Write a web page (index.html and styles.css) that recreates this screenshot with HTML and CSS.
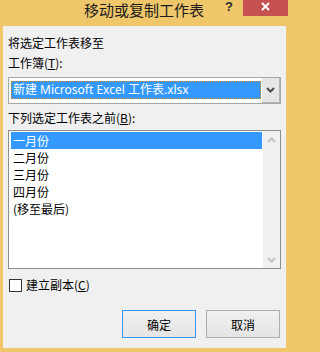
FILE: index.html
```html
<!DOCTYPE html>
<html lang="zh-CN">
<head>
<meta charset="utf-8">
<title>移动或复制工作表</title>
<link rel="stylesheet" href="styles.css">
</head>
<body>
<div class="window">
  <div class="titlebar">
    <div class="tb-side"></div>
    <div class="tb-title">移动或复制工作表</div>
    <div class="tb-side tb-controls">
      <span class="help">?</span>
      <span class="close"><svg width="9" height="9" viewBox="0 0 9 9"><path d="M1 1 L8 8 M8 1 L1 8" stroke="#fff" stroke-width="2" fill="none"/></svg></span>
    </div>
  </div>
  <div class="client">
    <div class="label first">将选定工作表移至</div>
    <div class="label second">工作簿(<u>T</u>):</div>
    <div class="combo">
      <div class="combo-value"><span>新建 Microsoft Excel 工作表.xlsx</span></div>
      <div class="combo-btn"><svg width="9" height="6" viewBox="0 0 9 6"><path d="M1 1 L4.5 4.5 L8 1" stroke="#4a4a4a" stroke-width="2" fill="none"/></svg></div>
    </div>
    <div class="label third">下列选定工作表之前(<u>B</u>):</div>
    <div class="listbox">
      <div class="list">
        <div class="row selected">一月份</div>
        <div class="row">二月份</div>
        <div class="row">三月份</div>
        <div class="row">四月份</div>
        <div class="row">(移至最后)</div>
      </div>
      <div class="scrollbar">
        <div class="arrow"><svg width="9" height="6" viewBox="0 0 9 6"><path d="M1 5 L4.5 1.5 L8 5" stroke="#c2c2c2" stroke-width="2" fill="none"/></svg></div>
        <div class="arrow"><svg width="9" height="6" viewBox="0 0 9 6"><path d="M1 1 L4.5 4.5 L8 1" stroke="#c2c2c2" stroke-width="2" fill="none"/></svg></div>
      </div>
    </div>
    <div class="check-row">
      <span class="checkbox"></span>
      <span class="check-label">建立副本(<u>C</u>)</span>
    </div>
    <div class="buttons">
      <div class="btn default">确定</div>
      <div class="btn">取消</div>
    </div>
  </div>
</div>
</body>
</html>
```
FILE: styles.css
```css
html, body {
  margin: 0;
  padding: 0;
}
body {
  width: 290px;
  height: 352px;
  overflow: hidden;
  background: #efc76a;
  font-family: "Noto Sans", "Noto Sans CJK SC", sans-serif;
  font-size: 12px;
  color: #000;
}
.window {
  display: flex;
  flex-direction: column;
  height: 352px;
}
.titlebar {
  height: 26px;
  display: grid;
  grid-template-columns: 1fr auto 1fr;
  align-items: start;
  padding-right: 2px;
}
.tb-title {
  font-family: "Noto Sans CJK SC", sans-serif;
  font-size: 15px;
  line-height: 20px;
  color: #1a1a1a;
}
.tb-controls {
  display: flex;
  justify-content: flex-end;
  align-items: flex-start;
}
.help {
  width: 20px;
  margin-right: 4px;
  text-align: center;
  font-family: "Liberation Sans", sans-serif;
  font-weight: bold;
  font-size: 13px;
  line-height: 13px;
  color: #2b2b2b;
}
.close {
  width: 45px;
  height: 16px;
  background: #c75050;
  display: flex;
  justify-content: center;
  align-items: flex-start;
  padding-top: 2px;
  box-sizing: border-box;
}
.client {
  flex: 1;
  margin: 0 4px 4px 3px;
  background: #f0f0f0;
  padding: 9px 5px 0 5px;
  display: flex;
  flex-direction: column;
}
.label {
  line-height: 16px;
  height: 16px;
  font-family: "Noto Sans CJK SC", sans-serif;
}
.label.second {
  margin-top: 4px;
}
.label.third {
  margin-top: 6px;
}
u {
  text-decoration: underline;
  text-underline-offset: 1px;
}
.combo {
  margin-top: 6px;
  height: 27px;
  box-sizing: border-box;
  border: 1px solid #a8a8a8;
  background: #fff;
  display: flex;
}
.combo-value {
  flex: 1;
  margin: 3px 1px 4px 2px;
  background: #3399ff;
  border: 1px dotted #d9822b;
  color: #fff;
  line-height: 16px;
  padding-left: 1px;
  white-space: nowrap;
  overflow: hidden;
}
.combo-btn {
  width: 17px;
  background: #e6e6e6;
  border-right: 1px solid #b4b4b4;
  border-bottom: 1px solid #b4b4b4;
  display: flex;
  align-items: center;
  justify-content: center;
}
.listbox {
  margin-top: 4px;
  height: 139px;
  box-sizing: border-box;
  border: 1px solid #8b8d91;
  background: #fff;
  display: flex;
}
.list {
  flex: 1;
  padding: 1px 1px 1px 2px;
  font-family: "Noto Sans CJK SC", sans-serif;
}
.row {
  height: 17px;
  line-height: 17px;
  padding-left: 2px;
}
.row.selected {
  background: #3399ff;
  color: #fff;
}
.scrollbar {
  width: 17px;
  background: #f0f0f0;
  display: flex;
  flex-direction: column;
  justify-content: space-between;
}
.arrow {
  height: 17px;
  display: flex;
  align-items: center;
  justify-content: center;
}
.check-row {
  margin-top: 8px;
  height: 16px;
  display: flex;
  align-items: center;
  gap: 4px;
  padding-left: 1px;
}
.checkbox {
  width: 13px;
  height: 13px;
  box-sizing: border-box;
  border: 1px solid #333;
  background: #fff;
}
.check-label {
  font-family: "Noto Sans CJK SC", sans-serif;
  line-height: 16px;
}
.buttons {
  margin-top: 17px;
  display: flex;
  justify-content: flex-end;
  gap: 10px;
  padding-right: 1px;
}
.btn {
  width: 74px;
  height: 28px;
  box-sizing: border-box;
  border: 1px solid #adadad;
  background: linear-gradient(#f0f0f0, #e5e5e5);
  display: flex;
  align-items: center;
  justify-content: center;
  font-family: "Noto Sans CJK SC", sans-serif;
}
.btn.default {
  border-color: #3399ff;
}
```
